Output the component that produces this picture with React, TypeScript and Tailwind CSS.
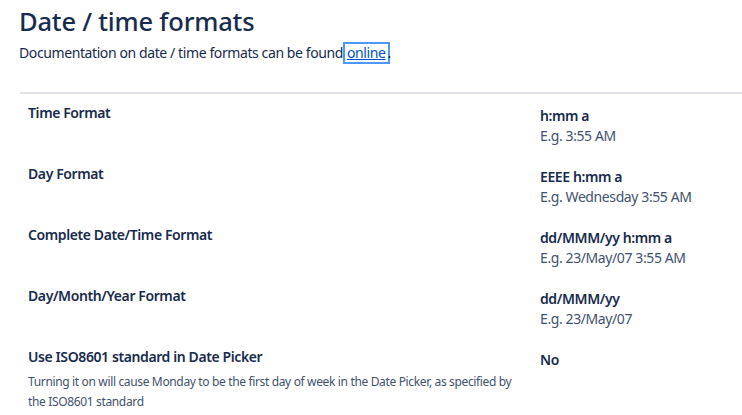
import React from 'react';

const rows: { label: string; value: string; example?: string; description?: string }[] = [
  { label: 'Time Format', value: 'h:mm a', example: 'E.g. 3:55 AM' },
  { label: 'Day Format', value: 'EEEE h:mm a', example: 'E.g. Wednesday 3:55 AM' },
  { label: 'Complete Date/Time Format', value: 'dd/MMM/yy h:mm a', example: 'E.g. 23/May/07 3:55 AM' },
  { label: 'Day/Month/Year Format', value: 'dd/MMM/yy', example: 'E.g. 23/May/07' },
  {
    label: 'Use ISO8601 standard in Date Picker',
    value: 'No',
    description:
      'Turning it on will cause Monday to be the first day of week in the Date Picker, as specified by the ISO8601 standard',
  },
];

export default function App() {
  return (
    <div className="min-h-screen bg-white pl-[19px] text-[#172b4d] font-['Segoe_UI','Noto_Sans',sans-serif]">
      <h2 className="pt-[5px] text-[25.5px] leading-[33px] font-medium tracking-[-0.2px]">Date / time formats</h2>
      <p className="mt-[5px] text-[14px] leading-[20px] tracking-[-0.4px]">
        Documentation on date / time formats can be found
        <a
          href="#"
          className="ml-[2px] inline-block px-[2px] leading-[18px] text-[#0052cc] underline outline-2 outline-[#4c9aff]"
        >
          online
        </a>
        .
      </p>
      <div className="mt-[29px] ml-[1px] border-t-2 border-[#dfe1e6] tracking-[-0.4px]">
        {rows.map(row => (
          <div key={row.label} className="flex pt-[9px] pb-[9px]">
            <div className="w-[520px] pl-[8px]">
              <div className="text-[14px] leading-[20px] font-semibold">{row.label}</div>
              {row.description && (
                <div className="mt-[5px] pr-[22px] text-[12px] leading-[20px] tracking-[-0.35px] text-[#42526e]">
                  {row.description}
                </div>
              )}
            </div>
            <div className="pt-[3px] text-[14px] leading-[20px]">
              <div className="font-semibold">{row.value}</div>
              {row.example && <div className="text-[#42526e]">{row.example}</div>}
            </div>
          </div>
        ))}
      </div>
    </div>
  );
}
